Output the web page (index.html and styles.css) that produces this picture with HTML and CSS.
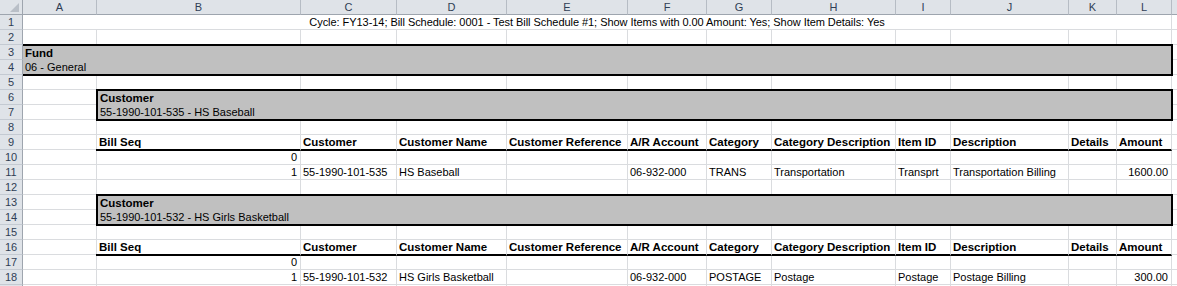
FILE: index.html
```html
<!DOCTYPE html>
<html>
<head>
<meta charset="utf-8">
<link rel="stylesheet" href="styles.css">
</head>
<body>
<div class="sheet">
  <div class="ch corner"><svg width="22" height="14" viewBox="0 0 22 14"><polygon points="19,3 19,12 10,12" fill="#b9bfc7"/></svg></div>
  <div class="ch">A</div><div class="ch">B</div><div class="ch">C</div><div class="ch">D</div><div class="ch">E</div><div class="ch">F</div><div class="ch">G</div><div class="ch">H</div><div class="ch">I</div><div class="ch">J</div><div class="ch">K</div><div class="ch">L</div><div class="ch end"></div>

  <div class="rh">1</div><div class="c title">Cycle: FY13-14; Bill Schedule: 0001 - Test Bill Schedule #1; Show Items with 0.00 Amount: Yes; Show Item Details: Yes</div><div class="c m"></div>

  <div class="rh">2</div><div class="c"></div><div class="c"></div><div class="c"></div><div class="c"></div><div class="c"></div><div class="c"></div><div class="c"></div><div class="c"></div><div class="c"></div><div class="c"></div><div class="c"></div><div class="c"></div><div class="c m"></div>

  <div class="rh">3</div>
  <div class="band fund"><div class="bl b">Fund</div><div class="bl">06 - General</div></div>
  <div class="c m"></div>
  <div class="rh">4</div><div class="c m"></div>

  <div class="rh">5</div><div class="c"></div><div class="c"></div><div class="c"></div><div class="c"></div><div class="c"></div><div class="c"></div><div class="c"></div><div class="c"></div><div class="c"></div><div class="c"></div><div class="c"></div><div class="c"></div><div class="c m"></div>

  <div class="rh">6</div><div class="c"></div>
  <div class="band cust"><div class="bl b">Customer</div><div class="bl">55-1990-101-535 - HS Baseball</div></div>
  <div class="c m"></div>
  <div class="rh">7</div><div class="c"></div><div class="c m"></div>

  <div class="rh">8</div><div class="c"></div><div class="c"></div><div class="c"></div><div class="c"></div><div class="c"></div><div class="c"></div><div class="c"></div><div class="c"></div><div class="c"></div><div class="c"></div><div class="c"></div><div class="c"></div><div class="c m"></div>

  <div class="rh">9</div><div class="c"></div>
  <div class="c hd first">Bill Seq</div><div class="c hd">Customer</div><div class="c hd">Customer Name</div><div class="c hd">Customer Reference</div><div class="c hd">A/R Account</div><div class="c hd">Category</div><div class="c hd">Category Description</div><div class="c hd">Item ID</div><div class="c hd">Description</div><div class="c hd">Details</div><div class="c hd">Amount</div>
  <div class="c m"></div>

  <div class="rh">10</div><div class="c"></div><div class="c r">0</div><div class="c"></div><div class="c"></div><div class="c"></div><div class="c"></div><div class="c"></div><div class="c"></div><div class="c"></div><div class="c"></div><div class="c"></div><div class="c"></div><div class="c m"></div>

  <div class="rh">11</div><div class="c"></div><div class="c r">1</div><div class="c">55-1990-101-535</div><div class="c">HS Baseball</div><div class="c"></div><div class="c">06-932-000</div><div class="c">TRANS</div><div class="c">Transportation</div><div class="c">Transprt</div><div class="c">Transportation Billing</div><div class="c"></div><div class="c r">1600.00</div><div class="c m"></div>

  <div class="rh">12</div><div class="c"></div><div class="c"></div><div class="c"></div><div class="c"></div><div class="c"></div><div class="c"></div><div class="c"></div><div class="c"></div><div class="c"></div><div class="c"></div><div class="c"></div><div class="c"></div><div class="c m"></div>

  <div class="rh">13</div><div class="c"></div>
  <div class="band cust"><div class="bl b">Customer</div><div class="bl">55-1990-101-532 - HS Girls Basketball</div></div>
  <div class="c m"></div>
  <div class="rh">14</div><div class="c"></div><div class="c m"></div>

  <div class="rh">15</div><div class="c"></div><div class="c"></div><div class="c"></div><div class="c"></div><div class="c"></div><div class="c"></div><div class="c"></div><div class="c"></div><div class="c"></div><div class="c"></div><div class="c"></div><div class="c"></div><div class="c m"></div>

  <div class="rh">16</div><div class="c"></div>
  <div class="c hd first">Bill Seq</div><div class="c hd">Customer</div><div class="c hd">Customer Name</div><div class="c hd">Customer Reference</div><div class="c hd">A/R Account</div><div class="c hd">Category</div><div class="c hd">Category Description</div><div class="c hd">Item ID</div><div class="c hd">Description</div><div class="c hd">Details</div><div class="c hd">Amount</div>
  <div class="c m"></div>

  <div class="rh">17</div><div class="c"></div><div class="c r">0</div><div class="c"></div><div class="c"></div><div class="c"></div><div class="c"></div><div class="c"></div><div class="c"></div><div class="c"></div><div class="c"></div><div class="c"></div><div class="c"></div><div class="c m"></div>

  <div class="rh">18</div><div class="c"></div><div class="c r">1</div><div class="c">55-1990-101-532</div><div class="c">HS Girls Basketball</div><div class="c"></div><div class="c">06-932-000</div><div class="c">POSTAGE</div><div class="c">Postage</div><div class="c">Postage</div><div class="c">Postage Billing</div><div class="c"></div><div class="c r">300.00</div><div class="c m"></div>

  <div class="rh"></div><div class="c"></div><div class="c"></div><div class="c"></div><div class="c"></div><div class="c"></div><div class="c"></div><div class="c"></div><div class="c"></div><div class="c"></div><div class="c"></div><div class="c"></div><div class="c"></div><div class="c m"></div>
</div>
</body>
</html>
```

FILE: styles.css
```css
html, body {
  margin: 0;
  padding: 0;
  background: #ffffff;
}
.sheet {
  display: grid;
  grid-template-columns: 23px 74px 204px 96px 110px 121px 79px 65px 124px 55px 118px 48px 55px 5px;
  grid-auto-rows: 15px;
  width: 1177px;
  overflow: hidden;
  font-family: "Liberation Sans", Arial, sans-serif;
  font-size: 11px;
  color: #000;
}
.sheet > div {
  box-sizing: border-box;
  white-space: nowrap;
}
.ch {
  background: #dfe3e8;
  border-right: 1px solid #b6bcc4;
  border-bottom: 1px solid #9ea5ae;
  color: #2f3e55;
  text-align: center;
  line-height: 14px;
  font-size: 11px;
}
.ch.end {
  border-right: none;
}
.corner {
  border-right: 1px solid #9ea5ae;
}
.corner svg {
  display: block;
}
.rh {
  background: #dfe3e8;
  border-right: 1px solid #9ea5ae;
  border-bottom: 1px solid #c4cad2;
  color: #2f3e55;
  text-align: center;
  line-height: 15px;
}
.c {
  border-right: 1px solid #dadcdf;
  border-bottom: 1px solid #dadcdf;
  padding: 0 2px;
  line-height: 15px;
}
.c.m {
  border-right: none;
}
.c.r {
  text-align: right;
  padding-right: 3px;
}
.title {
  grid-column: span 12;
  text-align: center;
  letter-spacing: -0.05px;
}
.hd {
  font-weight: bold;
  font-size: 11.5px;
  border-bottom: 2px solid #000;
  margin-bottom: -1px;
  position: relative;
  z-index: 1;
}
.hd.first {
  margin-left: -1px;
  padding-left: 3px;
}
.band {
  grid-row: span 2;
  background: #c0c0c0;
  border-top: 2px solid #000;
  border-bottom: 2px solid #000;
  border-right: 2px solid #000;
  margin: -1px -1px -1px 0;
  position: relative;
  z-index: 2;
  padding: 0 2px;
}
.band.fund {
  grid-column: span 12;
}
.band.cust {
  grid-column: span 11;
  border-left: 2px solid #000;
  margin-left: -1px;
  padding-left: 2px;
}
.bl {
  height: 14px;
  line-height: 14px;
}
.b {
  font-weight: bold;
  font-size: 11.5px;
}
```
